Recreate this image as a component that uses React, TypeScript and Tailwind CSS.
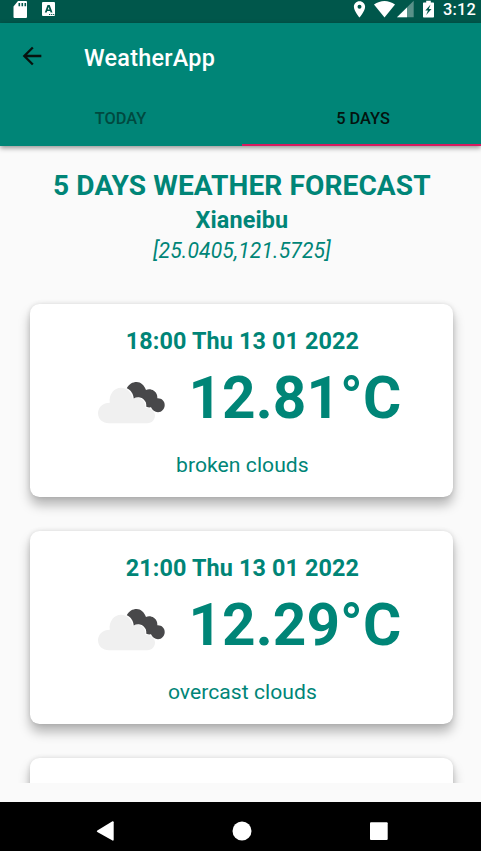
import React from "react";

type Forecast = { time: string; temperature: string; description: string };

const forecasts: Forecast[] = [
  { time: "18:00 Thu 13 01 2022", temperature: "12.81°C", description: "broken clouds" },
  { time: "21:00 Thu 13 01 2022", temperature: "12.29°C", description: "overcast clouds" },
];

function StatusBar() {
  return (
    <div className="flex h-[23px] shrink-0 items-start bg-[#00574b] text-white">
      <svg width="440" height="23" viewBox="0 0 440 23" fill="currentColor" className="shrink-0">
        <path
          fillRule="evenodd"
          d="M18 1h8a1 1 0 0 1 1 1v15a1 1 0 0 1-1 1H14.500a1 1 0 0 1-1-1V6.500zM18.500 3V6.200h1.600V3zm3 0V6.200h1.600V3zm3 0V6.200h1.600V3z"
        />
        <path
          fillRule="evenodd"
          d="M43 2h11a1 1 0 0 1 1 1v12a1 1 0 0 1-1 1H43a1 1 0 0 1-1-1V3a1 1 0 0 1 1-1zM47.500 5l-2.700 7.500h1.900l.5-1.500h2.900l.5 1.500h1.900L49.700 5zm1.150 2l.85 2.600h-1.750zM49 14v1h1.200v-1zm2.100 0v1h1.200v-1zm2 0v1h1.200v-1z"
        />
        <path
          fillRule="evenodd"
          d="M359.500 1.200c-3.300 0-5.600 2.500-5.600 5.600 0 4.100 5.600 10.800 5.600 10.800s5.600-6.700 5.600-10.800c0-3.100-2.300-5.600-5.600-5.600zm0 3.600a2 2 0 1 1 0 4 2 2 0 0 1 0-4z"
        />
        <path d="M374 4.500C380.500-.2 388.500-.2 395 4.500L384.500 17.500z" />
        <path d="M397 17.300 413.700.8v16.500z" opacity=".35" />
        <path d="M397 17.300 407 7.400v9.900z" />
        <path
          fillRule="evenodd"
          d="M426.200.7h4.600v1.800h2.200c.6 0 1 .4 1 1v12.900c0 .6-.4 1-1 1h-9c-.6 0-1-.4-1-1V3.500c0-.6.4-1 1-1h2.200zM430.600 4.500l-5.300 6h2.700l-1.800 4.500 5.300-6h-2.700z"
        />
      </svg>
      <span className="ml-auto mr-[5px] text-[16.4px] font-medium leading-[19px] tracking-[0.2px]">3:12</span>
    </div>
  );
}

function AppBar() {
  return (
    <header className="relative z-10 shrink-0 bg-[#008577] shadow-[0_2px_5px_rgba(0,0,0,0.42)]">
      <div className="flex h-[66px] items-center pl-[18px]">
        <svg width="28" height="28" viewBox="0 0 24 24" fill="#08130f">
          <path d="M20 11H7.830l5.590-5.590L12 4l-8 8 8 8 1.410-1.410L7.830 13H20v-2z" />
        </svg>
        <h1 className="ml-[38px] pt-[3px] text-[23.4px] font-medium leading-7 tracking-[0.25px] text-white">WeatherApp</h1>
      </div>
      <nav className="flex h-[57px] text-[16.4px] font-medium leading-5">
        <div className="flex w-[241px] items-center justify-center pt-[2px] text-[#00493f]">TODAY</div>
        <div className="ml-px flex flex-1 items-center justify-center border-b-2 border-[#d81b60] pl-[3px] pt-[4px] text-[#04140f]">
          5 DAYS
        </div>
      </nav>
    </header>
  );
}

function CloudIcon() {
  return (
    <svg width="68" height="44" viewBox="0 0 68 44">
      <path
        d="M11 42.300C4.500 42.300 0 38 0 32.300c0-6 5-10.600 11.800-10.600C10.500 13.500 16 6.700 23 6.700c3 0 5.500 1 7.500 3 2.300 2.200 3.700 4.800 4.200 8.300 2-1.300 4.500-1.600 7.100-.8 3.500 1 6 4.800 5.700 9.500 5.500 0 9.500 3.300 9.500 7.900 0 4.300-3.300 7.700-7.500 7.700z"
        fill="#f0f0f0"
      />
      <path
        d="M28.800 7.300C31 3 34.500 1 38.700 1c4 0 7.500 3 9.300 8 4-2 9.500.5 10.700 4.300.6 1.500.7 3 .6 4C63.500 17 66.700 20 66.700 24c0 4-3 7.200-6.700 7.200-3.200 0-5.700-2.200-7-4.900-1.700.2-3.300 0-4.700-.5 0-1.600 0-3.200-.5-4.600C46.200 18.500 44.500 17 42 16.400c-2.400-.5-4.500-.1-6.300 1-.2-2.300-.8-4.200-2-6C32.500 9.500 31 8.200 28.800 7.300z"
        fill="#48484a"
      />
    </svg>
  );
}

function ForecastCard({ time, temperature, description }: Forecast) {
  return (
    <article className="flex h-[192.5px] shrink-0 flex-col items-center rounded-[9.5px] bg-white pl-px pt-[21px] shadow-[0_8px_12px_rgba(0,0,0,0.28),0_0_5px_rgba(0,0,0,0.12)]">
      <h3 className="text-[23.4px] font-bold leading-[32px] tracking-[0.12px]">{time}</h3>
      <div className="flex h-[78px] w-full items-center pl-[67px]">
        <div className="pt-[13px]">
          <CloudIcon />
        </div>
        <span className="ml-[22px] whitespace-nowrap pt-[3px] text-[58.5px] font-bold leading-[78px] tracking-[0.1px]">
          {temperature}
        </span>
      </div>
      <p className="mt-[16px] text-[21.100px] leading-[28px] tracking-[0.05px]">{description}</p>
    </article>
  );
}

function NavigationBar() {
  return (
    <footer className="flex h-[49px] shrink-0 items-center bg-black pl-[96px] pt-[8px] text-white">
      <svg width="300" height="20" viewBox="0 0 300 20" fill="currentColor">
        <path d="M16.500.3a1 1 0 0 1 1.200.9v17.600a1 1 0 0 1-1.200.8L1.300 11a1 1 0 0 1 0-1.600z" />
        <circle cx="146" cy="10" r="9.500" />
        <rect x="274" y="1.300" width="17.700" height="17.700" rx="1" />
      </svg>
    </footer>
  );
}

export default function App() {
  return (
    <div className="flex h-[851px] w-[481px] flex-col overflow-hidden bg-[#fafafa] font-[Roboto,sans-serif] text-[#008577]">
      <StatusBar />
      <AppBar />
      <main className="flex h-[637px] shrink-0 flex-col overflow-hidden pl-[30.4px] pr-[27.6px]">
        <section className="flex flex-col items-center pt-[21px]">
          <h2 className="whitespace-nowrap text-[28.100px] font-bold leading-[37px] tracking-[0.08px]">
            5 DAYS WEATHER FORECAST
          </h2>
          <p className="text-[23.4px] font-bold leading-[33px] tracking-[0.15px]">Xianeibu</p>
          <p className="text-[21.100px] italic leading-[28px] tracking-[0.15px]">[25.0405,121.5725]</p>
        </section>
        <div className="mt-[39.400px] flex flex-col gap-[34.200px]">
          {forecasts.map((forecast) => (
            <ForecastCard key={forecast.time} {...forecast} />
          ))}
          <ForecastCard time="" temperature="" description="" />
        </div>
      </main>
      <div className="h-[19px] shrink-0" />
      <NavigationBar />
    </div>
  );
}
